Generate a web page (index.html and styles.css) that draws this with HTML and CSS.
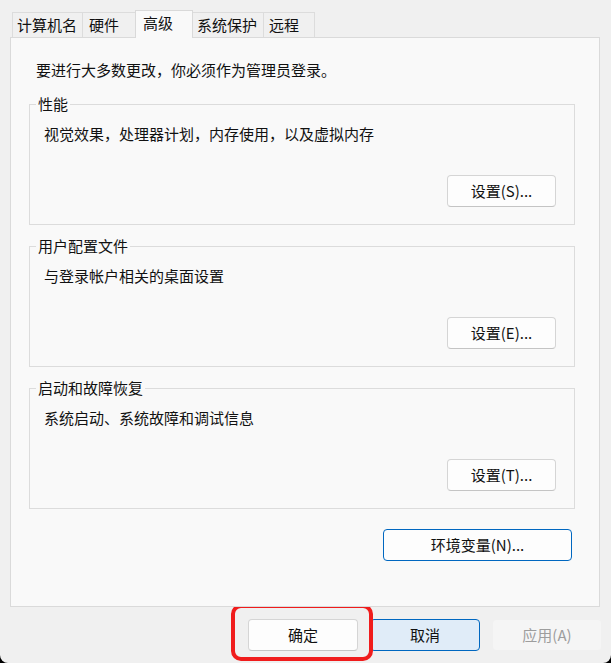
FILE: index.html
```html
<!DOCTYPE html>
<html lang="zh-CN">
<head>
<meta charset="utf-8">
<title>系统属性</title>
<link rel="stylesheet" href="styles.css">
</head>
<body>
<div class="window">
  <div class="tabs">
    <div class="tab tab-name">计算机名</div>
    <div class="tab tab-hw">硬件</div>
    <div class="tab tab-adv tab-active">高级</div>
    <div class="tab tab-sys">系统保护</div>
    <div class="tab tab-remote">远程</div>
  </div>
  <div class="panel">
    <p class="intro">要进行大多数更改，你必须作为管理员登录。</p>
    <fieldset class="group">
      <legend>性能</legend>
      <div class="desc">视觉效果，处理器计划，内存使用，以及虚拟内存</div>
      <div class="group-actions"><button class="btn">设置(S)...</button></div>
    </fieldset>
    <fieldset class="group">
      <legend>用户配置文件</legend>
      <div class="desc">与登录帐户相关的桌面设置</div>
      <div class="group-actions"><button class="btn">设置(E)...</button></div>
    </fieldset>
    <fieldset class="group">
      <legend>启动和故障恢复</legend>
      <div class="desc">系统启动、系统故障和调试信息</div>
      <div class="group-actions"><button class="btn">设置(T)...</button></div>
    </fieldset>
    <div class="env-row"><button class="btn btn-env">环境变量(N)...</button></div>
  </div>
  <div class="footer">
    <button class="btn btn-foot">确定</button>
    <button class="btn btn-foot btn-primary">取消</button>
    <button class="btn btn-foot btn-disabled">应用(A)</button>
    <div class="highlight"></div>
  </div>
</div>
</body>
</html>
```

FILE: styles.css
```css
html {
  background: #000;
}
body {
  margin: 0;
  font-family: "Noto Sans CJK SC", "Noto Sans", sans-serif;
  font-size: 15px;
  color: #111;
}
.window {
  position: relative;
  height: 663px;
  background: #f0f0f0;
  border-radius: 0 0 8px 8px;
  overflow: hidden;
}
.tabs {
  display: flex;
  align-items: flex-end;
  height: 25px;
  padding: 12px 0 0 12px;
  position: relative;
  z-index: 2;
}
.tab {
  box-sizing: border-box;
  height: 25px;
  padding: 0 0 0 4px;
  line-height: 24px;
  border: 1px solid #dcdcdc;
  border-bottom: none;
  margin-right: -1px;
  background: #f0f0f0;
  white-space: nowrap;
}
.tab-name { width: 71px; }
.tab-hw { width: 54px; padding-left: 6px; }
.tab-adv { width: 58px; padding-left: 7px; }
.tab-sys { width: 72px; }
.tab-remote { width: 52px; padding-left: 5px; }
.tab-active {
  height: 28px;
  margin-bottom: -1px;
  line-height: 24px;
  background: #f9f9f9;
  border-color: #d9d9d9;
  position: relative;
  z-index: 3;
}
.panel {
  box-sizing: border-box;
  height: 570px;
  margin: 0 11px 0 10px;
  padding: 22px 24px 0 18px;
  background: #f9f9f9;
  border: 1px solid #dadada;
  position: relative;
  z-index: 1;
}
.intro {
  margin: 0 0 14px 7px;
  line-height: 20px;
}
.group {
  margin: 0 0 11px 0;
  padding: 10px 18px 17px 14px;
  border: 1px solid #dcdcdc;
  min-width: 0;
}
.group legend {
  padding: 0 2px;
  margin-left: -8px;
  line-height: 20px;
}
.desc {
  line-height: 20px;
}
.group-actions {
  display: flex;
  justify-content: flex-end;
  margin-top: 31px;
}
.btn {
  box-sizing: border-box;
  height: 32px;
  width: 109px;
  font-family: inherit;
  font-size: 15px;
  color: #111;
  background: #fdfdfd;
  border: 1px solid #d5d5d5;
  border-bottom-color: #c4c4c4;
  border-radius: 4px;
  padding: 0;
  line-height: 30px;
}
.env-row {
  display: flex;
  justify-content: flex-end;
  margin-top: 20px;
  padding-right: 3px;
}
.btn-env {
  width: 189px;
  border: 1px solid #0067c0;
}
.footer {
  position: relative;
  display: flex;
  justify-content: flex-end;
  gap: 12px;
  padding: 12px 9px 0 0;
}
.btn-foot {
  width: 110px;
}
.btn-primary {
  background: #e0ecf8;
  border: 1px solid #0067c0;
}
.btn-disabled {
  background: #f5f5f5;
  border-color: #f0f0f0;
  color: #9d9d9d;
}
.highlight {
  position: absolute;
  left: 231px;
  top: -3px;
  width: 142px;
  height: 57px;
  box-sizing: border-box;
  border: 4px solid #f01c1c;
  border-radius: 10px;
  pointer-events: none;
}
```
